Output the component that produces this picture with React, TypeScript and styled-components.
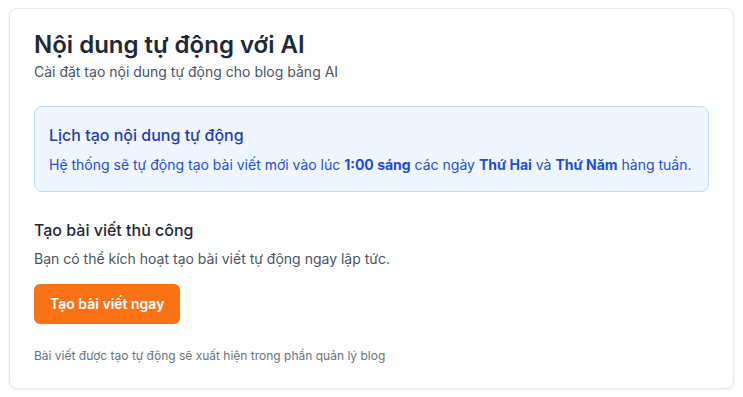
import React from 'react';
import styled, { createGlobalStyle } from 'styled-components';

const GlobalStyle = createGlobalStyle`
  body {
    margin: 0;
    background: #ffffff;
    font-family: Inter, 'Noto Sans', sans-serif;
  }
`;

const Page = styled.div`
  padding: 8px 9px 8px 9px;
`;

const Card = styled.div`
  background: #fff;
  border: 1px solid #e5e7eb;
  border-radius: 8px;
  box-shadow: 0 1px 3px rgba(0, 0, 0, 0.08);
  padding: 20px 24px 24px;
`;

const Title = styled.h1`
  margin: 0;
  font-size: 24px;
  line-height: 32px;
  font-weight: 600;
  color: #1f2937;
`;

const Subtitle = styled.p`
  margin: 1px 0 0;
  font-size: 14px;
  line-height: 20px;
  color: #4b5563;
`;

const InfoBox = styled.div`
  margin-top: 24px;
  background: #eff6ff;
  border: 1px solid #bfdbfe;
  border-radius: 8px;
  padding: 16px 14px;
`;

const InfoTitle = styled.h3`
  margin: 0;
  font-size: 16px;
  line-height: 24px;
  font-weight: 500;
  color: #1e40af;
`;

const InfoText = styled.p`
  margin: 8px 0 0;
  font-size: 14px;
  line-height: 20px;
  color: #1d4ed8;
  white-space: nowrap;

  strong {
    font-weight: 700;
  }
`;

const Section = styled.div`
  margin-top: 26px;
`;

const SectionTitle = styled.h3`
  margin: 0;
  font-size: 16px;
  line-height: 24px;
  font-weight: 500;
  color: #1f2937;
`;

const SectionText = styled.p`
  margin: 7px 0 0;
  font-size: 14px;
  line-height: 20px;
  color: #4b5563;
`;

const Button = styled.button`
  margin-top: 15px;
  border: none;
  border-radius: 6px;
  background: #f97316;
  color: #fff;
  font-family: inherit;
  font-size: 14px;
  font-weight: 600;
  line-height: 20px;
  padding: 10px 16px;
  cursor: pointer;
`;

const Note = styled.p`
  margin: 24px 0 0;
  font-size: 12px;
  line-height: 16px;
  color: #6b7280;
`;

export default function App() {
  return (
    <>
      <GlobalStyle />
      <Page>
        <Card>
          <Title>Nội dung tự động với AI</Title>
          <Subtitle>Cài đặt tạo nội dung tự động cho blog bằng AI</Subtitle>
          <InfoBox>
            <InfoTitle>Lịch tạo nội dung tự động</InfoTitle>
            <InfoText>
              Hệ thống sẽ tự động tạo bài viết mới vào lúc <strong>1:00 sáng</strong> các ngày{' '}
              <strong>Thứ Hai</strong> và <strong>Thứ Năm</strong> hàng tuần.
            </InfoText>
          </InfoBox>
          <Section>
            <SectionTitle>Tạo bài viết thủ công</SectionTitle>
            <SectionText>Bạn có thể kích hoạt tạo bài viết tự động ngay lập tức.</SectionText>
            <Button>Tạo bài viết ngay</Button>
          </Section>
          <Note>Bài viết được tạo tự động sẽ xuất hiện trong phần quản lý blog</Note>
        </Card>
      </Page>
    </>
  );
}
